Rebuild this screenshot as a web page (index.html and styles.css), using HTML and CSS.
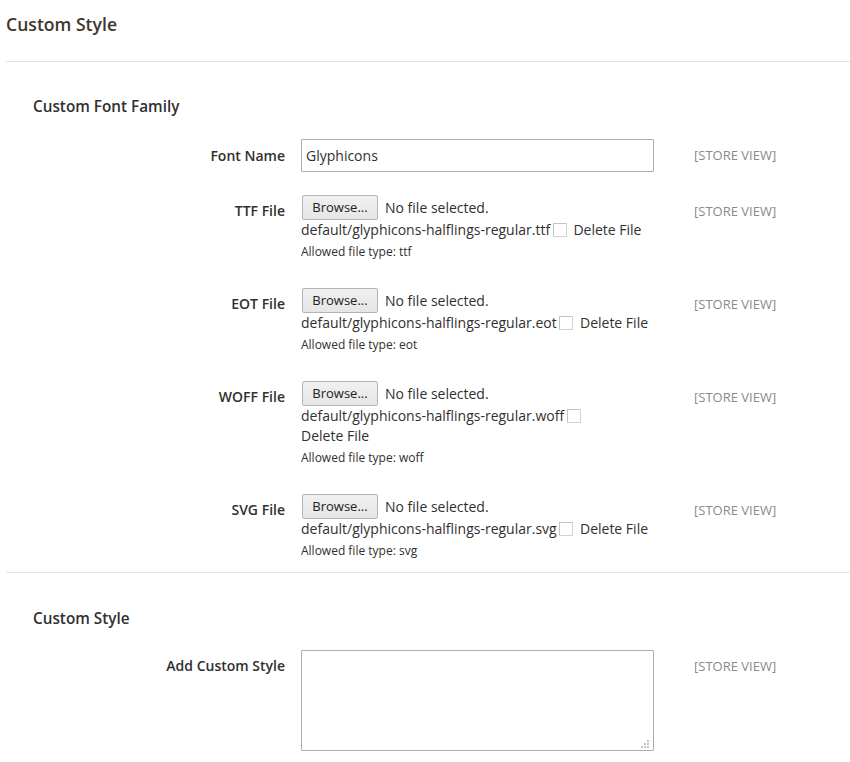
FILE: index.html
```html
<!DOCTYPE html>
<html>
<head>
<meta charset="utf-8">
<link rel="stylesheet" href="styles.css">
</head>
<body>
<div class="page">
  <h1 class="title">Custom Style</h1>

  <div class="section">
    <h2 class="legend">Custom Font Family</h2>

    <div class="field">
      <label class="label label-input">Font Name</label>
      <div class="control"><input class="text-input" type="text" value="Glyphicons"></div>
      <div class="scope label-input">[STORE VIEW]</div>
    </div>

    <div class="field">
      <label class="label">TTF File</label>
      <div class="control">
        <div class="file-line"><span class="browse">Browse...</span><span class="nofile">No file selected.</span></div>
        <div class="current">default/glyphicons-halflings-regular.ttf <input class="check" type="checkbox"> <span class="del">Delete File</span></div>
        <div class="note">Allowed file type: ttf</div>
      </div>
      <div class="scope">[STORE VIEW]</div>
    </div>

    <div class="field">
      <label class="label">EOT File</label>
      <div class="control">
        <div class="file-line"><span class="browse">Browse...</span><span class="nofile">No file selected.</span></div>
        <div class="current">default/glyphicons-halflings-regular.eot <input class="check" type="checkbox"> <span class="del">Delete File</span></div>
        <div class="note">Allowed file type: eot</div>
      </div>
      <div class="scope">[STORE VIEW]</div>
    </div>

    <div class="field">
      <label class="label">WOFF File</label>
      <div class="control">
        <div class="file-line"><span class="browse">Browse...</span><span class="nofile">No file selected.</span></div>
        <div class="current">default/glyphicons-halflings-regular.woff <input class="check" type="checkbox"> <span class="del">Delete File</span></div>
        <div class="note">Allowed file type: woff</div>
      </div>
      <div class="scope">[STORE VIEW]</div>
    </div>

    <div class="field">
      <label class="label">SVG File</label>
      <div class="control">
        <div class="file-line"><span class="browse">Browse...</span><span class="nofile">No file selected.</span></div>
        <div class="current">default/glyphicons-halflings-regular.svg <input class="check" type="checkbox"> <span class="del">Delete File</span></div>
        <div class="note">Allowed file type: svg</div>
      </div>
      <div class="scope">[STORE VIEW]</div>
    </div>
  </div>

  <div class="section">
    <h2 class="legend">Custom Style</h2>
    <div class="field">
      <label class="label">Add Custom Style</label>
      <div class="control">
        <div class="area-wrap">
          <textarea class="area"></textarea>
          <svg class="grip" width="8" height="8" viewBox="0 0 8 8"><g fill="#c4c4c4"><rect x="6" y="0" width="2" height="2"/><rect x="3" y="3" width="2" height="2"/><rect x="6" y="3" width="2" height="2"/><rect x="0" y="6" width="2" height="2"/><rect x="3" y="6" width="2" height="2"/><rect x="6" y="6" width="2" height="2"/></g></svg>
        </div>
      </div>
      <div class="scope">[STORE VIEW]</div>
    </div>
  </div>
</div>
</body>
</html>
```

FILE: styles.css
```css
html, body {
  margin: 0;
  padding: 0;
  background: #fff;
}
body {
  font-family: "Open Sans", "Liberation Sans", sans-serif;
  font-size: 14px;
  color: #303030;
}
.page {
  padding-left: 6px;
}
.title {
  margin: 0;
  padding: 14px 0 27px 0;
  font-size: 17.6px;
  line-height: 20px;
  font-weight: 600;
  color: #41362f;
  border-bottom: 1px solid #e3e3e3;
}
.section {
  padding: 34px 0 11px 0;
  border-bottom: 1px solid #e3e3e3;
}
.section:last-child {
  border-bottom: none;
  padding-top: 35px;
}
.legend {
  margin: 0 0 23px 27px;
  font-size: 15.3px;
  line-height: 20px;
  font-weight: 600;
  color: #303030;
}
.section:last-child .legend {
  margin-bottom: 22px;
}
.field {
  display: grid;
  grid-template-columns: 279px 353px 1fr;
  column-gap: 16px;
  margin-bottom: 26px;
}
.field:first-of-type {
  margin-bottom: 23px;
}
.field:last-child {
  margin-bottom: 0;
}
.label {
  text-align: right;
  font-weight: 600;
  line-height: 20px;
  padding-top: 6px;
  color: #303030;
}
.label-input {
  padding-top: 7px;
}
.control {
  line-height: 20px;
}
.scope {
  padding-left: 24px;
  padding-top: 6px;
  font-size: 13px;
  line-height: 20px;
  color: #8a8a8a;
}
.text-input {
  box-sizing: border-box;
  width: 353px;
  height: 33px;
  margin: 0;
  padding: 0 4px;
  border: 1px solid #adadad;
  border-radius: 1px;
  font-family: inherit;
  font-size: 14px;
  color: #303030;
  outline: none;
}
.file-line {
  display: flex;
  align-items: center;
  height: 25px;
}
.browse {
  box-sizing: border-box;
  width: 76px;
  height: 25px;
  margin-left: 1px;
  padding: 0;
  text-align: center;
  font-size: 13px;
  line-height: 23px;
  background: linear-gradient(#f0f0f0, #e6e6e6);
  border: 1px solid #b4b4b4;
  border-radius: 2px;
  color: #222;
}
.nofile {
  margin-left: 7px;
}
.current {
  line-height: 20px;
}
.del {
  white-space: nowrap;
}
.check {
  appearance: none;
  -webkit-appearance: none;
  box-sizing: border-box;
  width: 14px;
  height: 14px;
  margin: 0 3px 0 -1px;
  vertical-align: -2px;
  border: 1px solid #d3d3d3;
  border-top-color: #c4c4c4;
  border-left-color: #c4c4c4;
  border-radius: 1px;
  background: #fff;
}
.note {
  margin-top: 2px;
  font-size: 12px;
  line-height: 20px;
  color: #303030;
}
.area-wrap {
  position: relative;
  width: 353px;
  height: 101px;
}
.area {
  box-sizing: border-box;
  display: block;
  width: 353px;
  height: 101px;
  margin: 0;
  border: 1px solid #adadad;
  border-radius: 1px;
  resize: none;
  outline: none;
}
.grip {
  position: absolute;
  right: 5px;
  bottom: 3px;
}
```
